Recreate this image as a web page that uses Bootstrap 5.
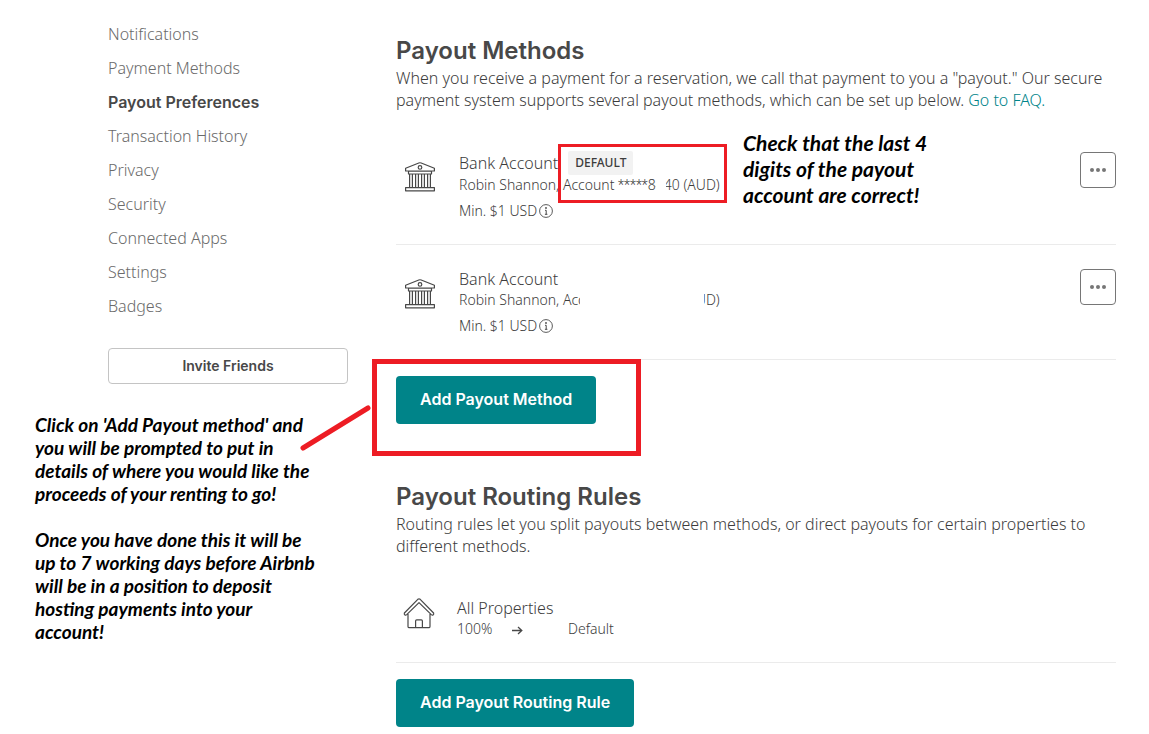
<!DOCTYPE html>
<html lang="en">
<head>
<meta charset="utf-8">
<meta name="viewport" content="width=device-width, initial-scale=1">
<title>Payout Preferences</title>
<link href="https://cdn.jsdelivr.net/npm/bootstrap@5.3.0/dist/css/bootstrap.min.css" rel="stylesheet">
<script src="https://cdn.jsdelivr.net/npm/bootstrap@5.3.0/dist/js/bootstrap.bundle.min.js" defer></script>
<style>
  body { font-family: "Noto Sans", sans-serif; font-weight: 300; font-size: 16px; line-height: 22px; color: #3c3c3c; background: #fff; }
  .account-side { flex: 0 0 348px; padding-top: 17px; }
  .account-nav { margin-left: 108px; }
  .account-nav .nav-link { padding: 0; line-height: 34px; color: #6a6a6a; }
  .account-nav .nav-link.active { font-family: Inter, sans-serif; font-weight: 600; color: #484848; }
  .btn-invite { margin: 25px 0 29px 108px; width: 240px; height: 36px; padding: 0; border: 1px solid #c4c4c4; border-radius: 4px; font: 600 14px/20px Inter, sans-serif; color: #484848; }
  .annotation { font-family: Lato, sans-serif; font-weight: 700; font-style: italic; color: #000; }
  .side-note { margin-left: 35px; font-size: 19px; line-height: 23px; }
  .side-note p { margin-bottom: 23px; white-space: nowrap; }
  .account-main { padding: 35px 33px 0 48px; min-width: 0; }
  h2 { font: 600 24px/32px Inter, sans-serif; margin: 0; color: #484848; }
  .intro { margin-bottom: 17px; }
  .intro a { color: #008489; text-decoration: none; }
  .payout-row { padding: 23px 0; border-bottom: 1px solid #ebebeb; }
  .payout-icon { width: 32px; height: 32px; margin: 9px 23px 0 8px; flex: none; }
  .house-icon { margin: 0 22px 0 7px; }
  .row-detail { font-size: 14px; line-height: 20px; }
  .title-line { gap: 10px; line-height: 24px; }
  .default-tag { background: #f2f2f2; font-size: 12px; font-weight: 500; padding: 0 7px; border-radius: 2px; }
  .stars { font-family: Roboto, sans-serif; }
  .min-line { margin-top: 6px; }
  .min-line svg { margin-left: 2px; }
  .btn-more { width: 36px; height: 36px; margin-top: 1px; padding: 0; border: 1px solid #767676; border-radius: 4px; display: flex; align-items: center; justify-content: center; }
  .btn-teal { background: #008489; color: #fff; border: 0; border-radius: 4px; height: 48px; padding: 0 24px 2px; font: 600 16px/24px Inter, sans-serif; }
  .btn-teal:hover { background: #00777b; color: #fff; }
  .row-actions { margin-top: 16px; }
  .routing { margin-top: 57px; }
  .callout { position: absolute; border: 3px solid #ed1c24; pointer-events: none; }
  .callout-account { left: 99px; top: -7px; width: 169px; height: 59px; }
  .callout-add { border-width: 5px; inset: -17px -45px -32px -24px; }
  .callout-line { position: absolute; left: -96px; top: 28px; }
  .check-note { position: absolute; left: 284px; top: -21px; font-size: 21px; line-height: 26px; white-space: nowrap; }
  .masked { position: absolute; top: 0; height: 20px; background: #fff; }
  .mask-digits { left: 197px; width: 10px; }
  .mask-account { left: 121px; width: 124px; }
  .share { width: 111px; }
  .arrow { margin-left: 20px; }
</style>
</head>
<body>
<svg class="d-none" xmlns="http://www.w3.org/2000/svg">
  <symbol id="bank" viewBox="0 0 32 32"><g fill="none" stroke="#484848" stroke-width="1.2" stroke-linejoin="round">
    <path d="M1.6 11V8.2L14.8 3q1.2-.5 2.4 0L30.4 8.2V11zM4.5 11.2h23V14h-23zM2.5 27.5h27M1.6 30.8v-3.1h28.8v3.1z"/>
    <circle cx="16" cy="7.4" r="1.8"/>
    <path d="M5.6 14v13.5M8.4 14v13.5M11.6 14v13.5M14.4 14v13.5M17.6 14v13.5M20.4 14v13.5M23.6 14v13.5M26.4 14v13.5"/></g></symbol>
  <symbol id="info" viewBox="0 0 14 14"><circle cx="7" cy="7" r="6.4" fill="none" stroke="#484848" stroke-width=".9"/><circle cx="7" cy="4" r=".9" fill="#484848"/><path d="M6 6.3h1.2v4M5.9 10.3h2.5" fill="none" stroke="#484848"/></symbol>
  <symbol id="dots" viewBox="0 0 18 6"><g fill="#767676"><circle cx="3" cy="3" r="2"/><circle cx="9" cy="3" r="2"/><circle cx="15" cy="3" r="2"/></g></symbol>
</svg>
<div class="d-flex">
  <aside class="account-side">
    <nav class="nav flex-column account-nav">
      <a class="nav-link" href="#">Notifications</a>
      <a class="nav-link" href="#">Payment Methods</a>
      <a class="nav-link active" href="#" aria-current="page">Payout Preferences</a>
      <a class="nav-link" href="#">Transaction History</a>
      <a class="nav-link" href="#">Privacy</a>
      <a class="nav-link" href="#">Security</a>
      <a class="nav-link" href="#">Connected Apps</a>
      <a class="nav-link" href="#">Settings</a>
      <a class="nav-link" href="#">Badges</a>
    </nav>
    <button type="button" class="btn btn-invite">Invite Friends</button>
    <div class="annotation side-note">
      <p>Click on 'Add Payout method' and<br>you will be prompted to put in<br>details of where you would like the<br>proceeds of your renting to go!</p>
      <p class="mb-0">Once you have done this it will be<br>up to 7 working days before Airbnb<br>will be in a position to deposit<br>hosting payments into your<br>account!</p>
    </div>
  </aside>
  <main class="account-main flex-grow-1">
    <section>
      <h2>Payout Methods</h2>
      <p class="intro">When you receive a payment for a reservation, we call that payment to you a "payout." Our secure payment system supports several payout methods, which can be set up below. <a href="#">Go to FAQ.</a></p>
      <div class="payout-row d-flex align-items-start">
        <svg class="payout-icon" aria-hidden="true"><use href="#bank"/></svg>
        <div class="position-relative flex-grow-1">
          <div class="title-line d-flex align-items-center"><span>Bank Account</span><span class="default-tag">DEFAULT</span></div>
          <div class="row-detail position-relative">Robin Shannon, Account <span class="stars">*****</span>8440 (AUD)<span class="masked mask-digits"></span></div>
          <div class="row-detail min-line d-flex align-items-center">Min. $1 USD <svg width="14" height="14" aria-hidden="true"><use href="#info"/></svg></div>
          <div class="callout callout-account"></div>
          <div class="annotation check-note">Check that the last 4<br>digits of the payout<br>account are correct!</div>
        </div>
        <button type="button" class="btn btn-more" aria-label="More options"><svg width="18" height="6"><use href="#dots"/></svg></button>
      </div>
      <div class="payout-row d-flex align-items-start">
        <svg class="payout-icon" aria-hidden="true"><use href="#bank"/></svg>
        <div class="flex-grow-1">
          <div>Bank Account</div>
          <div class="row-detail position-relative">Robin Shannon, Account <span class="stars">*****</span>0000 (AUD)<span class="masked mask-account"></span></div>
          <div class="row-detail min-line d-flex align-items-center">Min. $1 USD <svg width="14" height="14" aria-hidden="true"><use href="#info"/></svg></div>
        </div>
        <button type="button" class="btn btn-more" aria-label="More options"><svg width="18" height="6"><use href="#dots"/></svg></button>
      </div>
      <div class="row-actions d-flex">
        <div class="position-relative">
          <button type="button" class="btn btn-teal">Add Payout Method</button>
          <div class="callout callout-add"></div>
          <svg class="callout-line" width="72" height="48" aria-hidden="true"><path d="M3 44L68 4" stroke="#ed1c24" stroke-width="5" stroke-linecap="round"/></svg>
        </div>
      </div>
    </section>
    <section class="routing">
      <h2>Payout Routing Rules</h2>
      <p class="intro">Routing rules let you split payouts between methods, or direct payouts for certain properties to different methods.</p>
      <div class="payout-row d-flex align-items-start">
        <svg class="payout-icon house-icon" viewBox="0 0 32 32" aria-hidden="true"><g fill="none" stroke="#484848" stroke-width="1.2" stroke-linejoin="round"><path d="M1.4 16L14.8 2.3q1.2-1 2.4 0L30.6 16q.5 1.3-.5 1.9-.9.5-1.8-.3L16 5.6 3.7 17.6q-.9.8-1.8.3-1-.6-.5-1.9zM5 17v12.4q0 1.3 1.3 1.3h19.4q1.3 0 1.3-1.3V17M12.6 30.5v-6.6q0-1.1 1.1-1.1h4.6q1.1 0 1.1 1.1v6.6"/></g></svg>
        <div class="flex-grow-1">
          <div>All Properties</div>
          <div class="row-detail d-flex"><div class="share">100%<svg class="arrow" width="11" height="9" viewBox="0 0 11 9" aria-hidden="true"><path d="M0 4.5h9.5M6 1l3.8 3.5L6 8" fill="none" stroke="#484848" stroke-width="1.3"/></svg></div><div>Default</div></div>
        </div>
      </div>
      <div class="row-actions">
        <button type="button" class="btn btn-teal">Add Payout Routing Rule</button>
      </div>
    </section>
  </main>
</div>
</body>
</html>
